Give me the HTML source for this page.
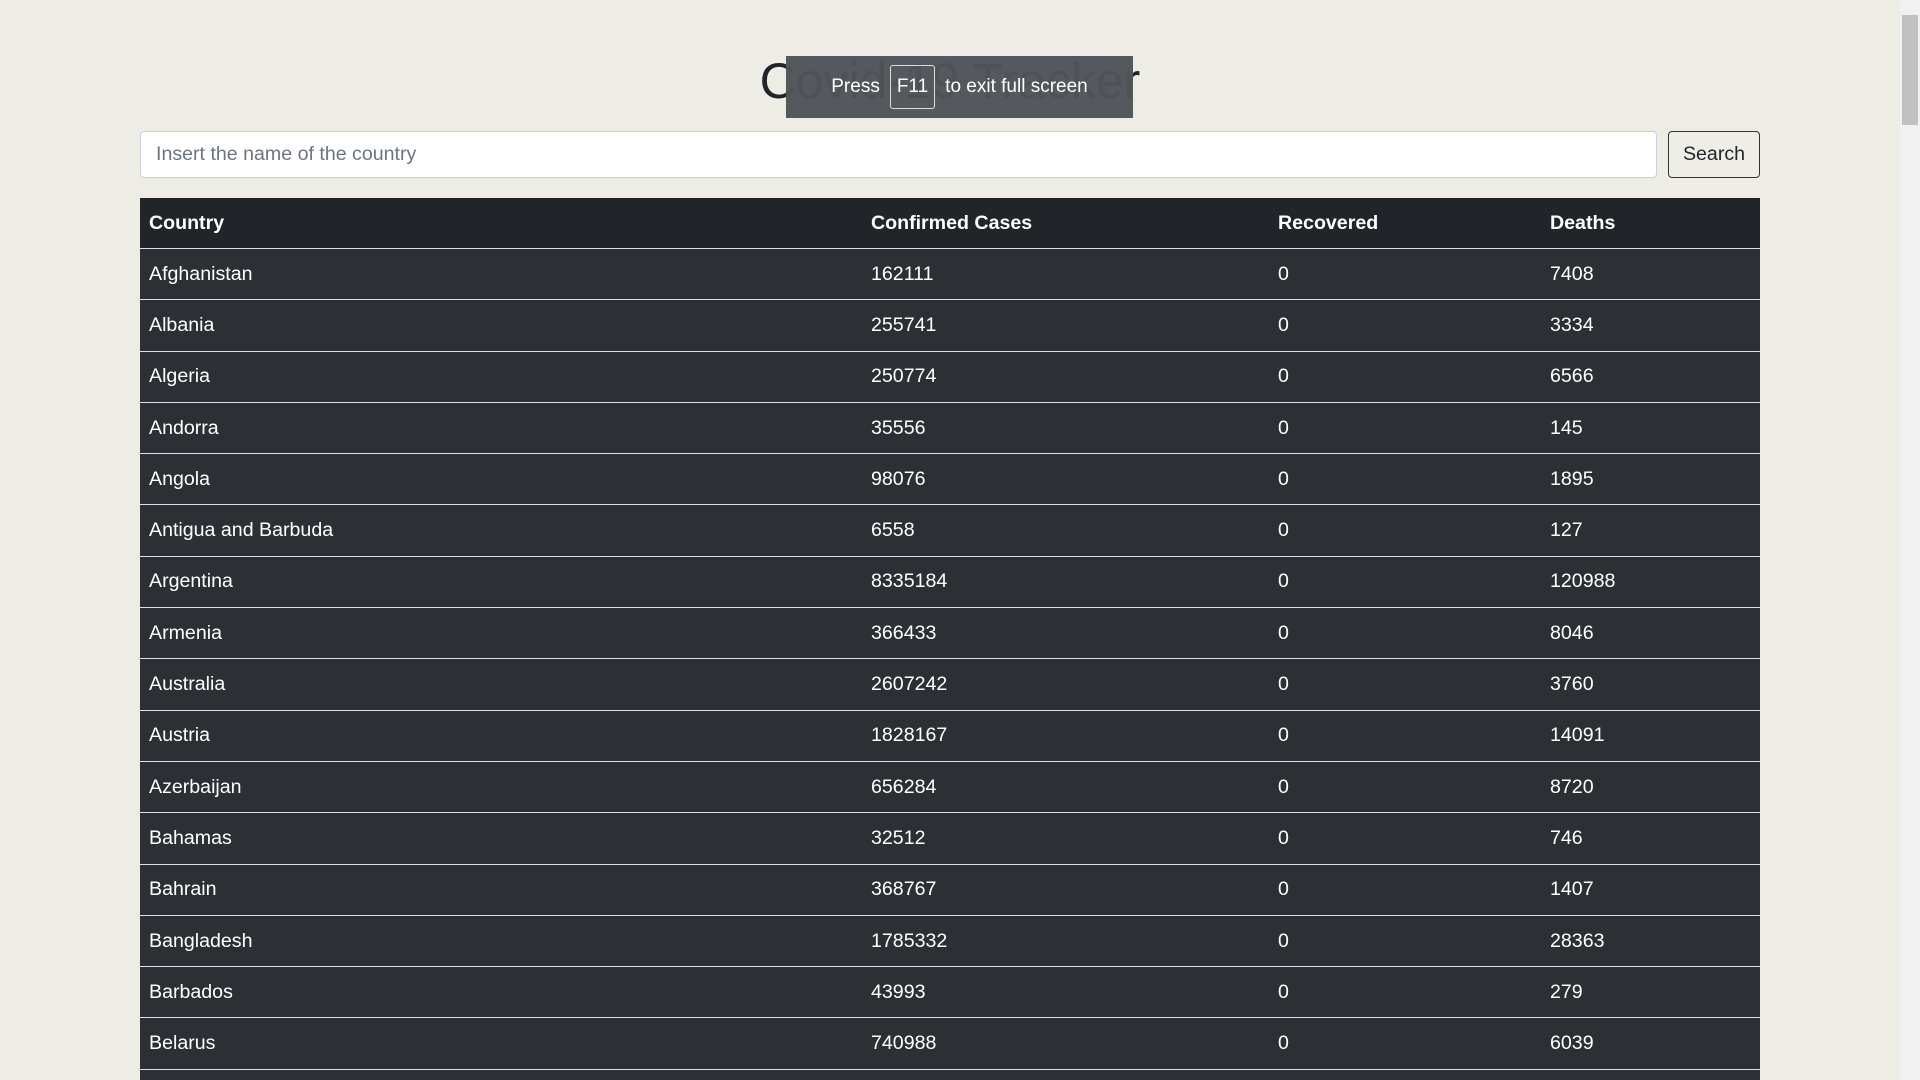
<!DOCTYPE html>
<html><head><style>
html,body{margin:0;padding:0;width:1920px;height:1080px;overflow:hidden;}
body{background:#edece5;font-family:"Liberation Sans",sans-serif;}
.wrap{position:relative;width:1920px;height:1080px;overflow:hidden;}
h1{position:absolute;top:52px;left:0;width:1900px;text-align:center;margin:0;font-weight:400;font-size:50px;color:#212529;}
.ov{position:absolute;left:786px;top:56px;width:347px;height:62px;background:rgba(80,84,88,0.97);color:#fff;font-size:19px;display:flex;align-items:center;justify-content:center;gap:10px;}
.ov .k{border:1.5px solid #ddd;border-radius:3px;padding:10px 6px;}
input{position:absolute;left:140px;top:131px;width:1517px;height:47px;box-sizing:border-box;border:1px solid #ccd;border-radius:4px;background:#fff;font-size:19.6px;padding:0 15px;color:#6c757d;font-family:"Liberation Sans",sans-serif;}
.btn{position:absolute;left:1668px;top:131px;width:92px;height:47px;box-sizing:border-box;border:1px solid #333;border-radius:4px;background:#eeede7;font-size:19.6px;display:flex;align-items:center;justify-content:center;color:#212529;}
table{position:absolute;left:140px;top:198px;width:1620px;border-collapse:collapse;color:#fff;font-size:19.6px;}
th{background:#212529;text-align:left;height:50px;padding:0 0 0 9px;font-weight:700;}
td{background:#2c3034;height:50.3px;padding:0 0 0 9px;border-top:1px solid #dee2e6;}
.sb{position:absolute;left:1900px;top:0;width:20px;height:1080px;background:#f1f1f1;}
.th{position:absolute;left:1902px;top:15px;width:16px;height:110px;background:#c1c1c1;}
</style></head><body><div class="wrap">
<h1>Covid-19 Tracker</h1>
<div class="ov"><span>Press</span><span class="k">F11</span><span>to exit full screen</span></div>
<input value="Insert the name of the country">
<div class="btn">Search</div>
<table>
<colgroup><col style="width:722px"><col style="width:407px"><col style="width:272px"><col></colgroup>
<tr><th>Country</th><th>Confirmed Cases</th><th>Recovered</th><th>Deaths</th></tr>
<tr><td>Afghanistan</td><td>162111</td><td>0</td><td>7408</td></tr>
<tr><td>Albania</td><td>255741</td><td>0</td><td>3334</td></tr>
<tr><td>Algeria</td><td>250774</td><td>0</td><td>6566</td></tr>
<tr><td>Andorra</td><td>35556</td><td>0</td><td>145</td></tr>
<tr><td>Angola</td><td>98076</td><td>0</td><td>1895</td></tr>
<tr><td>Antigua and Barbuda</td><td>6558</td><td>0</td><td>127</td></tr>
<tr><td>Argentina</td><td>8335184</td><td>0</td><td>120988</td></tr>
<tr><td>Armenia</td><td>366433</td><td>0</td><td>8046</td></tr>
<tr><td>Australia</td><td>2607242</td><td>0</td><td>3760</td></tr>
<tr><td>Austria</td><td>1828167</td><td>0</td><td>14091</td></tr>
<tr><td>Azerbaijan</td><td>656284</td><td>0</td><td>8720</td></tr>
<tr><td>Bahamas</td><td>32512</td><td>0</td><td>746</td></tr>
<tr><td>Bahrain</td><td>368767</td><td>0</td><td>1407</td></tr>
<tr><td>Bangladesh</td><td>1785332</td><td>0</td><td>28363</td></tr>
<tr><td>Barbados</td><td>43993</td><td>0</td><td>279</td></tr>
<tr><td>Belarus</td><td>740988</td><td>0</td><td>6039</td></tr>
<tr><td>&nbsp;</td><td></td><td></td><td></td></tr>
</table>
<div class="sb"></div><div class="th"></div>
</div></body></html>
